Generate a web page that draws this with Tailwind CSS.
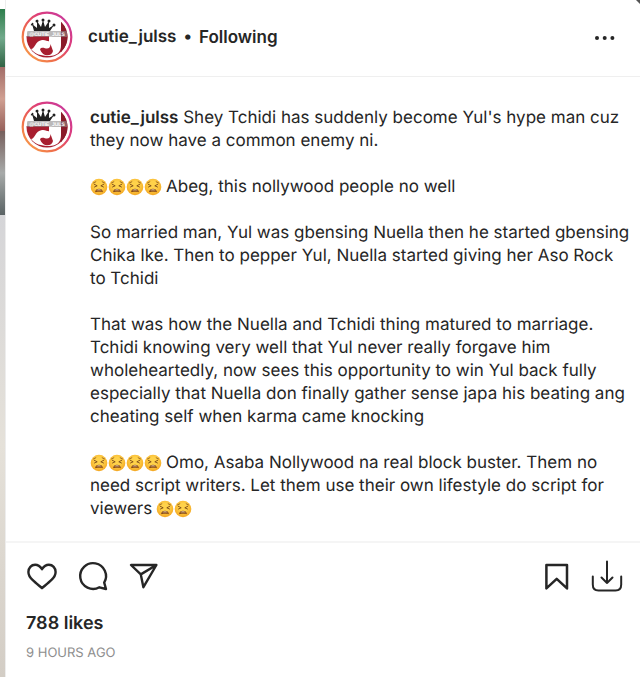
<!DOCTYPE html>
<html lang="en">
<head>
    <meta charset="UTF-8">
    <meta name="viewport" content="width=device-width, initial-scale=1.0">
    <title>cutie_julss - Post</title>
    <script src="https://cdn.jsdelivr.net/npm/@tailwindcss/browser@4"></script>
</head>
<body class="relative bg-white text-[#262626] font-['Inter',sans-serif] [text-rendering:geometricPrecision]">
    <!-- Shared drawings -->
    <svg class="absolute size-0" aria-hidden="true">
        <defs>
            <linearGradient id="ring" x1="0" y1="1" x2="1" y2="0">
                <stop offset="0.05" stop-color="#f9a04a"/>
                <stop offset="0.35" stop-color="#ee6a4c"/>
                <stop offset="0.65" stop-color="#dc3c7c"/>
                <stop offset="1" stop-color="#c33aa6"/>
            </linearGradient>
            <radialGradient id="face" cx="0.5" cy="0.4" r="0.6">
                <stop offset="0.4" stop-color="#ffd24a"/>
                <stop offset="1" stop-color="#f3a622"/>
            </radialGradient>
            <clipPath id="photo"><circle cx="26" cy="26" r="20.5"/></clipPath>
        </defs>
        <symbol id="avatar" viewBox="0 0 52 52">
            <circle cx="26" cy="26" r="24.3" fill="#fff" stroke="url(#ring)" stroke-width="2.2"/>
            <g clip-path="url(#photo)">
                <path d="M5 25H28V32H40V11H50V50H5Z" fill="#a81f30"/>
                <path d="M40 8H47V42L40 44Z" fill="#8a1b2b"/>
                <path d="M28 8H40V34C40 41 36 45 28 45C20 45 14 43 10 38C14 38 14 30 21 29C25 28.500 27 31 28 30Z" fill="#fff"/>
                <path d="M19 38C21 35.500 24 37.500 26 37.500C28 37.500 29.500 36 29.500 33L32 40C31 46 21 46 19 38Z" fill="#a81f30"/>
                <path d="M5 8H29V24H5Z" fill="#fff"/>
                <path d="M11 13L16 17L16 10L20 16L22 9L24 16L28 10L28 17L33 14L29 20H13Z" fill="#222"/>
                <g fill="#222"><circle cx="11" cy="13" r="1.5"/><circle cx="16" cy="10" r="1.5"/><circle cx="22" cy="9" r="1.5"/><circle cx="28" cy="10" r="1.5"/><circle cx="33" cy="14" r="1.5"/></g>
                <rect x="6" y="20" width="40" height="6" fill="#8d8a8a" opacity="0.6"/>
            </g>
        </symbol>
        <symbol id="weary" viewBox="0 0 18 18">
            <circle cx="9" cy="9" r="8.3" fill="url(#face)"/>
            <g fill="none" stroke="#7a4818" stroke-width="0.9" stroke-linecap="round" stroke-linejoin="round">
                <path d="M4.3 6.3L7.2 7.8L4.5 9M13.7 6.3L10.8 7.8L13.5 9"/>
                <path d="M3.5 4.9L5.8 3.8M14.5 4.9L12.2 3.8" stroke-width="0.7"/>
            </g>
            <path d="M5 14.3C5.2 11.8 6.9 10.8 9 10.8S12.8 11.8 13 14.3C11.8 13.5 6.2 13.5 5 14.3Z" fill="#8a4c18"/>
            <path d="M6.3 12.2C7.4 11.2 10.6 11.2 11.7 12.2Z" fill="#fff3db"/>
        </symbol>
    </svg>

    <!-- Dark page corner -->
    <svg class="absolute top-0 right-0 size-1" viewBox="0 0 4 4" aria-hidden="true"><path d="M0 0H4V4Z" fill="#555"/></svg>

    <div class="flex min-h-screen">
        <!-- Page edge behind the post -->
        <div class="w-[5px] shrink-0 bg-[#d3cdc5]">
            <div class="h-[9px] bg-white"></div>
            <div class="h-[58px] bg-linear-to-b from-[#2c7d4c] via-[#71a98b] to-[#316345]"></div>
            <div class="h-[64px] bg-linear-to-b from-[#a26d68] via-[#d0a092] to-[#96615b]"></div>
            <div class="h-[84px] bg-linear-to-b from-[#76605d] via-[#a7aaa9] to-[#5b6465]"></div>
            <div class="h-[462px] bg-linear-to-b from-[#d5d5d8] via-[#e5e1d9] to-[#d3cdc5]"></div>
        </div>

        <article class="min-w-0 flex-1 border-l border-[#ededed]">
            <header class="flex h-[77px] items-center border-b border-[#efefef] pr-6 pb-0.5 pl-[15px]">
                <svg class="size-[52px]" viewBox="0 0 52 52" role="img" aria-label="cutie_julss profile picture">
                    <use href="#avatar"/>
                    <text x="26" y="25" text-anchor="middle" class="fill-white font-['Liberation_Sans',sans-serif] text-[5px] font-bold">@CUTIE_JULS</text>
                </svg>
                <div class="ml-[15px] flex items-center gap-[7px] text-[17px] leading-[23px] font-semibold">
                    <a href="#">cutie_julss</a>
                    <span>•</span>
                    <button type="button">Following</button>
                </div>
                <button type="button" class="ml-auto" aria-label="More options">
                    <svg class="h-6 w-[22px]" viewBox="0 0 22 24" fill="#262626"><circle cx="3" cy="13" r="2"/><circle cx="10.7" cy="13" r="2"/><circle cx="18.4" cy="13" r="2"/></svg>
                </button>
            </header>

            <!-- Caption -->
            <section class="flex pt-6 pb-5 pl-[15px]">
                <svg class="size-[52px] shrink-0" viewBox="0 0 52 52" role="img" aria-label="cutie_julss profile picture">
                    <use href="#avatar"/>
                    <text x="26" y="25" text-anchor="middle" class="fill-white font-['Liberation_Sans',sans-serif] text-[5px] font-bold">@CUTIE_JULS</text>
                </svg>
                <div class="ml-[17px] min-w-0 space-y-[23px] pt-[6px] text-[17px] leading-[23px]">
                    <p><a href="#" class="font-semibold">cutie_julss</a> Shey Tchidi has suddenly become Yul's hype man cuz<br>they now have a common enemy ni.</p>
                    <p class="flex items-start gap-1">
                        <span class="flex pt-0.5"><svg class="size-[18px]"><use href="#weary"/></svg><svg class="size-[18px]"><use href="#weary"/></svg><svg class="size-[18px]"><use href="#weary"/></svg><svg class="size-[18px]"><use href="#weary"/></svg></span>
                        Abeg, this nollywood people no well
                    </p>
                    <p>So married man, Yul was gbensing Nuella then he started gbensing<br>Chika Ike. Then to pepper Yul, Nuella started giving her Aso Rock<br>to Tchidi</p>
                    <p>That was how the Nuella and Tchidi thing matured to marriage.<br>Tchidi knowing very well that Yul never really forgave him<br>wholeheartedly, now sees this opportunity to win Yul back fully<br>especially that Nuella don finally gather sense japa his beating ang<br>cheating self when karma came knocking</p>
                    <div>
                        <p class="flex items-start gap-1">
                            <span class="flex pt-0.5"><svg class="size-[18px]"><use href="#weary"/></svg><svg class="size-[18px]"><use href="#weary"/></svg><svg class="size-[18px]"><use href="#weary"/></svg><svg class="size-[18px]"><use href="#weary"/></svg></span>
                            Omo, Asaba Nollywood na real block buster. Them no
                        </p>
                        <p>need script writers. Let them use their own lifestyle do script for</p>
                        <p class="flex items-start gap-1">
                            viewers
                            <span class="flex pt-0.5"><svg class="size-[18px]"><use href="#weary"/></svg><svg class="size-[18px]"><use href="#weary"/></svg></span>
                        </p>
                    </div>
                </div>
            </section>

            <!-- Actions -->
            <footer class="border-t-2 border-[#f5f5f5] pt-[17px] pr-[17px] pl-5">
                <div class="flex items-center">
                    <div class="flex gap-[19px]">
                        <button type="button" aria-label="Like">
                            <svg class="size-8" viewBox="0 0 32 32" fill="none" stroke="#262626" stroke-width="2.4" stroke-linejoin="round"><path d="M16 28.2C14.5 26.8 9.5 22.7 6.5 19.8C3.8 17.4 2.4 15.2 2.4 12C2.4 7.8 5.3 4.8 9.1 4.8C12.4 4.8 14.3 6.5 16 9.2C17.7 6.5 19.6 4.8 22.9 4.8C26.7 4.8 29.6 7.8 29.6 12C29.6 15.2 28.2 17.4 25.5 19.8C22.5 22.7 17.5 26.8 16 28.2Z"/></svg>
                        </button>
                        <button type="button" aria-label="Comment">
                            <svg class="size-8" viewBox="0 0 32 32" fill="none" stroke="#262626" stroke-width="2.4" stroke-linejoin="round"><path d="M27.2 22.6A12.9 12.9 0 1 0 22.4 27.3L29 29Z"/></svg>
                        </button>
                        <button type="button" aria-label="Share">
                            <svg class="size-8" viewBox="0 0 32 32" fill="none" stroke="#262626" stroke-width="2.4" stroke-linejoin="round"><path d="M3 5H28.4L15.4 27.2L12.8 14.4ZM12.8 14.4L28.4 5"/></svg>
                        </button>
                    </div>
                    <div class="ml-auto flex gap-[18px]">
                        <button type="button" aria-label="Save">
                            <svg class="size-8" viewBox="0 0 32 32" fill="none" stroke="#262626" stroke-width="2.5" stroke-linejoin="round"><path d="M5.4 5H26V28.4L15.7 18.8L5.4 28.4Z"/></svg>
                        </button>
                        <button type="button" aria-label="Download">
                            <svg class="size-8" viewBox="0 0 32 32" fill="none" stroke="#262626" stroke-width="2" stroke-linecap="round" stroke-linejoin="round"><path d="M16 1.5V23M10.5 17.5L16 23L21.5 17.5M1.8 16.5V24.5C1.8 28.5 4 30.5 7.5 30.5H24.5C28 30.5 30.2 28.5 30.2 24.5V16.5"/></svg>
                        </button>
                    </div>
                </div>
                <p class="mt-5 text-[18px] leading-[23px] font-semibold">788 likes</p>
                <time class="mt-2 block text-[13px] leading-5 text-[#8e8e8e]">9 HOURS AGO</time>
            </footer>
        </article>
    </div>
</body>
</html>
